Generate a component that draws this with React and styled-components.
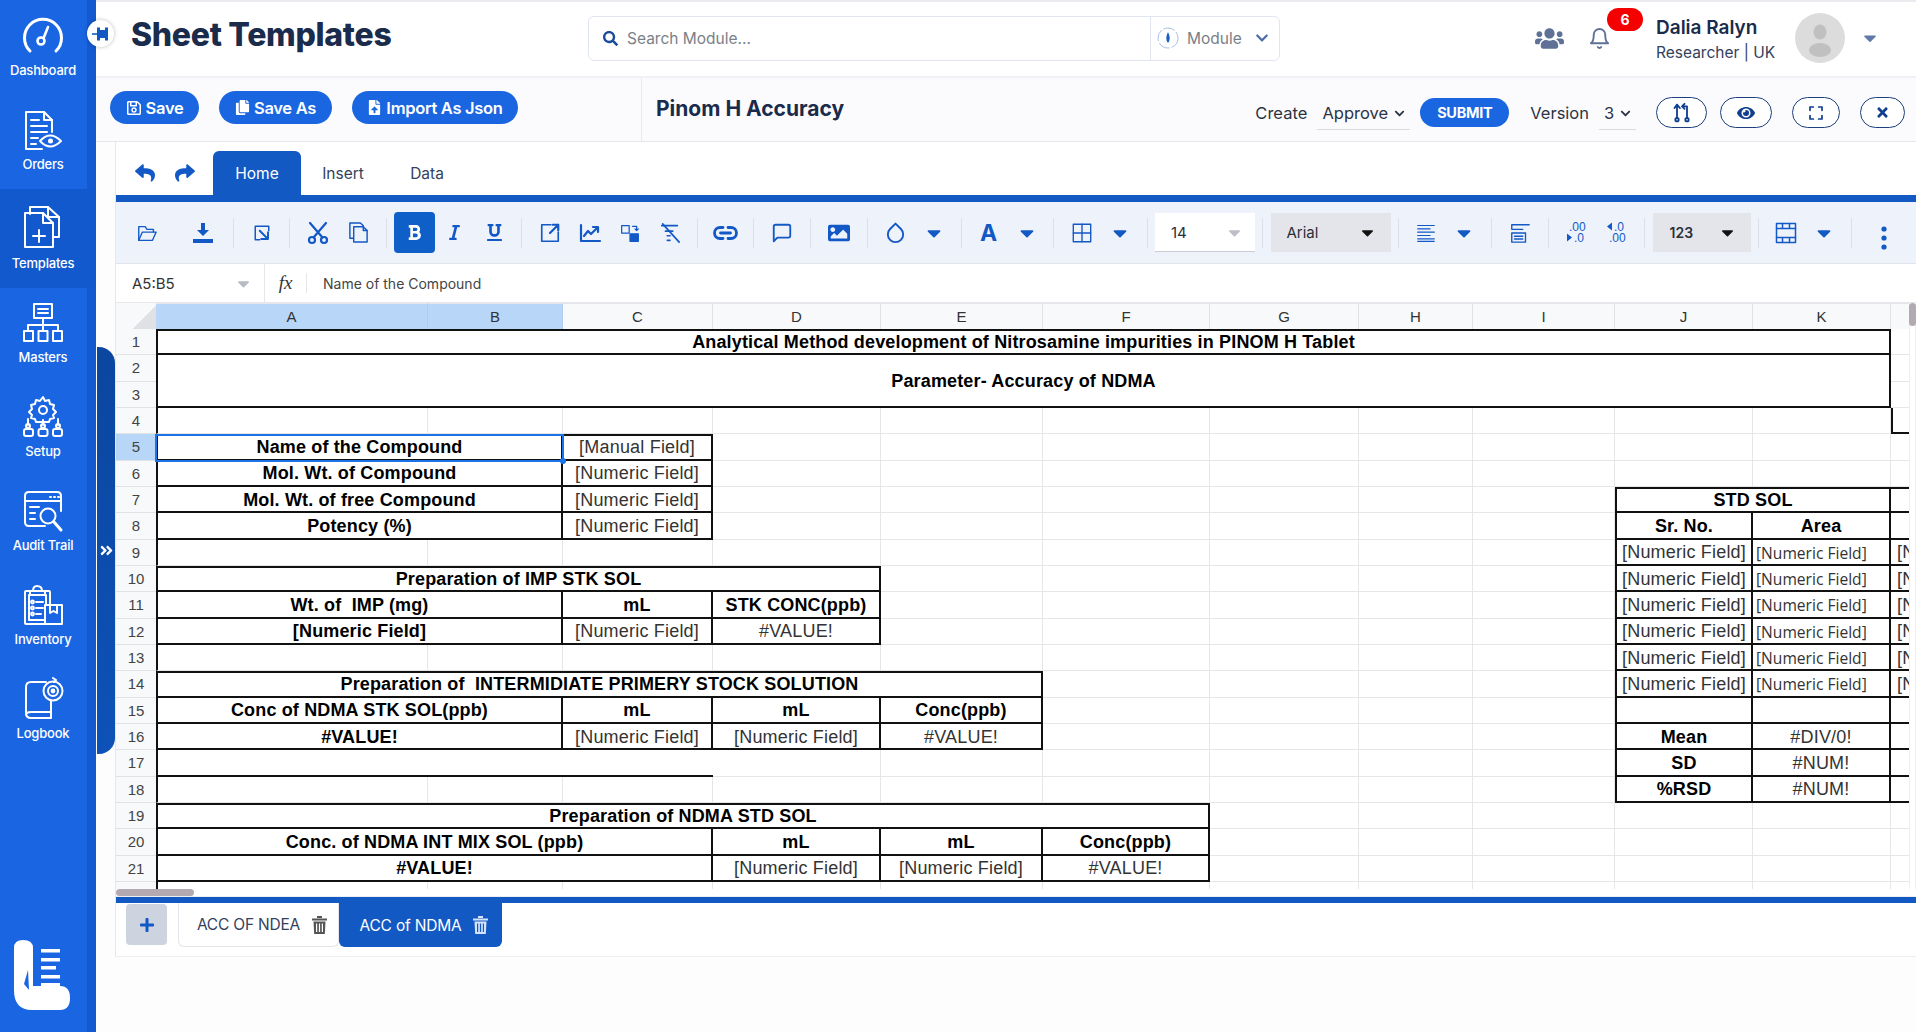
import React from "react";
import styled, { createGlobalStyle } from "styled-components";
import {
  FaReply, FaShare, FaSearch, FaUsers, FaEye, FaTimes, FaChevronDown,
  FaCaretDown, FaFileUpload, FaCopy, FaRegSave, FaAngleDoubleRight, FaPlus, FaImage, FaBold,
  FaItalic, FaUnderline,
} from "react-icons/fa";
import { FiBell, FiDroplet, FiMessageSquare } from "react-icons/fi";

const UI = `Inter, "Noto Sans", sans-serif`;
const SHEET = `"Liberation Sans", Arial, sans-serif`;

const GlobalStyle = createGlobalStyle`
  html, body { margin: 0; padding: 0; background: #fdfdfd; }
  * { box-sizing: border-box; }
  body { font-family: ${UI}; overflow: hidden; }
`;

const Shell = styled.div`
  display: flex;
  position: relative;
  width: 1916px;
  height: 1032px;
  overflow: hidden;
`;

/* ---------- sidebar ---------- */
const Sidebar = styled.nav`
  width: 96px;
  height: 1032px;
  flex-shrink: 0;
  display: flex;
  flex-direction: column;
  padding-top: 1px;
  background: linear-gradient(to right, #1a66e2 87px, #1459cf 87px);
  position: relative;
`;
const NavItem = styled.div`
  height: ${(p) => (p.$active ? "99px" : "94px")};
  padding-top: ${(p) => (p.$active ? "15px" : "13px")};
  padding-right: 10px;
  display: flex;
  flex-direction: column;
  align-items: center;
  background: ${(p) => (p.$active ? "#1259cd" : "transparent")};
  color: #fff;
  font-size: 13px;
  font-weight: 500;
  letter-spacing: -0.2px;
  svg { display: block; height: 44px; width: 44px; margin-bottom: ${(p) => (p.$active ? "7px" : "4px")}; }
`;
const Logo = styled.div`
  margin-top: auto;
  padding: 0 0 22px 14px;
  svg { display: block; }
`;

const Ico = ({ children }) => (
  <svg viewBox="0 0 44 44" fill="none" stroke="#fff" strokeWidth="2" strokeLinecap="round" strokeLinejoin="round">
    {children}
  </svg>
);

const navs = [
  ["Dashboard", <Ico><path strokeWidth="3" d="M9 37 A18.5 18.5 0 1 1 35 37" /><circle cx="20" cy="27" r="3.5" strokeWidth="2.6" /><path strokeWidth="2.6" d="M23 23 L27 13" /></Ico>],
  ["Orders", <Ico><path d="M31 24 V12 L23 4 H5 V41 H21" /><path d="M23 4 V12 H31" /><path d="M10 12 H18 M10 18 H26 M10 24 H26 M10 30 H17 M10 36 H15" /><path d="M19 33 Q29 22 40 33 Q29 44 19 33 Z" /><circle cx="29.5" cy="33" r="1.5" fill="#fff" /></Ico>],
  ["Templates", <Ico><path d="M9 10 V3 H27 L38 13 V33 H32" /><path d="M27 3 V13 H38" /><path d="M4 9 H22 L32 19 V43 H4 Z" /><path d="M22 9 V19 H32" /><path d="M18 26 V38 M12 32 H24" /></Ico>],
  ["Masters", <Ico><rect x="13" y="3" width="18" height="14" /><path d="M17 8 H27 M17 12 H27" /><path d="M22 17 V24 M7 30 V24 H37 V30 M22 24 V30" /><rect x="3" y="30" width="9" height="10" /><rect x="17.5" y="30" width="9" height="10" /><rect x="32" y="30" width="9" height="10" /></Ico>],
  ["Setup", <Ico><path d="M22 2 l2 4 4 -1 1 4 4 1 -1 4 3 3 -3 3 1 3 -4 1 -1 3 H15 l-1 -3 -4 -1 1 -3 -3 -3 3 -3 -1 -4 4 -1 1 -4 4 1 Z" /><circle cx="22" cy="15" r="4" /><path d="M7 24 V30 M22 25 V30 M37 24 V30" /><circle cx="7" cy="31" r="2" /><circle cx="22" cy="31" r="2" /><circle cx="37" cy="31" r="2" /><rect x="3" y="34" width="9" height="7" rx="2" /><rect x="17.5" y="34" width="9" height="7" rx="2" /><rect x="32" y="34" width="9" height="7" rx="2" /></Ico>],
  ["Audit Trail", <Ico><path d="M40 22 V7 Q40 3 36 3 H8 Q4 3 4 7 V33 Q4 37 8 37 H24" /><path d="M4 12 H40" /><path d="M29 8 H30 M33 8 H34 M37 8 H38" /><path d="M9 18 H18 M9 24 H14 M9 30 H14 M9 18 V18" /><circle cx="27" cy="27" r="7.5" /><path strokeWidth="3" d="M33 33 L40 41" /></Ico>],
  ["Inventory", <Ico><rect x="4" y="8" width="25" height="33" rx="1" /><rect x="8" y="12" width="17" height="25" /><path d="M12 8 Q12 3 16 3 Q21 3 21 8 H24 V12 H9 V8 Z" /><circle cx="11.5" cy="19" r="1.4" /><circle cx="11.5" cy="25" r="1.4" /><circle cx="11.5" cy="31" r="1.4" /><path d="M15 19 H22 M15 25 H22 M15 31 H20" /><rect x="24" y="22" width="17" height="19" fill="#1a66e2" /><path d="M29 22 V30 L32.5 28 L36 30 V22" /></Ico>],
  ["Logbook", <Ico><path d="M25 5 H10 Q5 5 5 10 V36 Q5 41 10 41 H30 V35 H10 Q5 35 5 38 M30 35 V24" /><circle cx="32" cy="14" r="9.5" /><circle cx="32" cy="14" r="5" /><circle cx="32" cy="14" r="1.4" fill="#fff" /><path d="M32 1 L35 3 L33 5" /></Ico>],
];

/* ---------- header ---------- */
const Main = styled.div`
  flex: 1;
  min-width: 0;
  display: flex;
  flex-direction: column;
`;
const Header = styled.header`
  height: 76px;
  display: flex;
  align-items: center;
  background: #fff;
  border-top: 2px solid #e9ebef;
  padding-left: 35px;
`;
const Title = styled.h1`
  width: 457px;
  margin: -10px 0 0;
  font-size: 32px;
  font-weight: 800;
  letter-spacing: -0.3px;
  color: #1a2b4b;
`;
const SearchBox = styled.div`
  width: 692px;
  height: 45px;
  margin-top: -2px;
  display: flex;
  align-items: center;
  border: 1px solid #e1e5f0;
  border-radius: 6px;
  background: #fff;
`;
const SearchInput = styled.div`
  flex: 1;
  display: flex;
  align-items: center;
  gap: 9px;
  padding-left: 14px;
  height: 100%;
  color: #7a7f88;
  font-size: 15.5px;
  svg { color: #1a4a9a; font-size: 15px; }
`;
const ModulePick = styled.div`
  width: 129px;
  height: 100%;
  display: flex;
  align-items: center;
  padding-left: 6px;
  gap: 8px;
  border-left: 1px solid #e1e5f0;
  color: #7a7f88;
  font-size: 15.5px;
  > svg:last-child { margin-left: 5px; color: #4d6da8; font-size: 14px; }
`;
const HeadRight = styled.div`
  margin-left: auto;
  margin-top: -2px;
  display: flex;
  align-items: center;
  padding-right: 36px;
`;
const People = styled.div`
  color: #5f7196;
  font-size: 29px;
  line-height: 0;
  margin-right: 24px;
`;
const BellWrap = styled.div`
  position: relative;
  width: 24px;
  margin-right: 44px;
  line-height: 0;
  color: #5f7196;
  font-size: 23px;
`;
const Badge = styled.span`
  position: absolute;
  left: 19px;
  top: -19px;
  width: 36px;
  height: 23px;
  border-radius: 12px;
  background: #f40000;
  color: #fff;
  font-size: 14px;
  line-height: 23px;
  font-weight: 700;
  text-align: center;
`;
const UserInfo = styled.div`
  width: 139px;
  padding-top: 2px;
  display: flex;
  flex-direction: column;
  gap: 4px;
`;
const UserName = styled.div`
  font-size: 19px;
  font-weight: 600;
  color: #1a2b4b;
`;
const UserRole = styled.div`
  font-size: 15.5px;
  color: #33415c;
`;
const Avatar = styled.div`
  line-height: 0;
  margin-right: 15px;
`;

/* ---------- action row ---------- */
const ActionRow = styled.div`
  height: 66px;
  display: flex;
  background: #fbfbfd;
  border-top: 2px solid #f0f1f4;
  border-bottom: 1px solid #e6e7eb;
`;
const ActionLeft = styled.div`
  width: 546px;
  display: flex;
  align-items: center;
  gap: 20px;
  padding: 0 0 4px 14px;
  border-right: 1px solid #e9eaee;
`;
const PillBtn = styled.button`
  width: ${(p) => p.$w}px;
  height: 33px;
  border: 0;
  border-radius: 17px;
  background: #1a66e0;
  color: #fff;
  font-family: ${UI};
  font-size: 16.5px;
  font-weight: 600;
  letter-spacing: -0.3px;
  display: flex;
  align-items: center;
  justify-content: center;
  gap: 4px;
`;
const ActionRight = styled.div`
  flex: 1;
  display: flex;
  align-items: center;
  padding: 0 11px 0 14px;
`;
const DocName = styled.div`
  font-size: 21px;
  font-weight: 700;
  color: #1a2b4b;
  margin-top: -2px;
`;
const Controls = styled.div`
  margin-left: auto;
  display: flex;
  align-items: center;
  font-size: 16.5px;
  color: #2b3344;
  margin-top: 6px;
`;
const Under = styled.div`
  width: ${(p) => p.$w}px;
  height: 34px;
  margin: 0 ${(p) => p.$mr}px 0 ${(p) => p.$ml}px;
  padding-top: 2px;
  display: flex;
  align-items: center;
  justify-content: center;
  gap: 6px;
  border-bottom: 1px solid #d9dbe0;
  svg { font-size: 11px; color: #2b3344; }
`;
const SubmitBtn = styled.button`
  width: 89px;
  height: 29px;
  border: 0;
  border-radius: 15px;
  background: #1a66e0;
  color: #fff;
  font-family: ${UI};
  font-size: 14.5px;
  font-weight: 700;
  letter-spacing: -0.3px;
  margin-right: 21px;
`;
const RoundBtn = styled.button`
  width: ${(p) => p.$w}px;
  height: 31px;
  margin-left: ${(p) => p.$ml}px;
  border: 1.5px solid #1c3f7e;
  border-radius: 16px;
  background: #fff;
  color: #113f8f;
  display: flex;
  align-items: center;
  justify-content: center;
  font-size: 16px;
  padding: 0;
`;

/* ---------- spreadsheet shell ---------- */
const Sheet = styled.section`
  margin-left: 19px;
  height: 815px;
  display: flex;
  flex-direction: column;
  background: #fff;
  border-left: 1px solid #e6e7eb;
  border-bottom: 1px solid #eceef1;
`;
const MenuTabs = styled.div`
  height: 60px;
  flex-shrink: 0;
  display: flex;
  align-items: flex-end;
  border-bottom: 7px solid #1259c3;
  padding-top: 8px;
`;
const History = styled.div`
  width: 97px;
  align-self: center;
  display: flex;
  justify-content: center;
  gap: 20px;
  color: #1359c6;
  font-size: 20px;
  line-height: 0;
`;
const MenuTab = styled.div`
  width: ${(p) => p.$w}px;
  height: 44px;
  display: flex;
  align-items: center;
  justify-content: center;
  border-radius: 6px 6px 0 0;
  background: ${(p) => (p.$on ? "#1259c3" : "transparent")};
  color: ${(p) => (p.$on ? "#fff" : "#33415c")};
  font-size: 15.5px;
`;
const Toolbar = styled.div`
  height: 62px;
  flex-shrink: 0;
  display: flex;
  align-items: center;
  background: #eef2fb;
  border-bottom: 1px solid #e2e4e9;
`;
const Group = styled.div`
  width: ${(p) => p.$w}px;
  height: 100%;
  flex-shrink: 0;
  display: flex;
  align-items: center;
  justify-content: center;
`;
const Sep = styled.i`
  width: 1px;
  height: 30px;
  flex-shrink: 0;
  background: #dcdfe6;
`;
const Tool = styled.div`
  width: ${(p) => p.$w || 40}px;
  height: ${(p) => (p.$on ? "41px" : "auto")};
  display: flex;
  align-items: center;
  justify-content: center;
  border-radius: 4px;
  background: ${(p) => (p.$on ? "#0f5fc9" : "transparent")};
  color: ${(p) => (p.$on ? "#fff" : "#1359c6")};
  font-size: ${(p) => p.$size || 20}px;
  line-height: 0;
`;
const LetterA = styled.span`
  font-family: ${UI};
  font-weight: 700;
  font-size: 23px;
`;
const Kebab = styled.svg`
  margin-top: 10px;
`;
const Select = styled.div`
  width: ${(p) => p.$w}px;
  height: 39px;
  display: flex;
  align-items: center;
  justify-content: space-between;
  padding: 0 ${(p) => p.$pr || 14}px 0 ${(p) => p.$pl || 16}px;
  background: ${(p) => (p.$white ? "#fff" : "#e3e5ea")};
  border-bottom: ${(p) => (p.$white ? "1px solid #c9ccd3" : "0")};
  color: #2b2f38;
  font-size: ${(p) => p.$size || 15}px;
  font-weight: ${(p) => p.$weight || 400};
  svg { font-size: 19px; color: ${(p) => (p.$white ? "#bdbfc6" : "#111")}; }
`;
const FormulaBar = styled.div`
  height: 39px;
  flex-shrink: 0;
  display: flex;
  align-items: center;
  font-family: ${SHEET};
  border-bottom: 1px solid #e6e7eb;
`;
const NameBox = styled.div`
  width: 149px;
  height: 100%;
  display: flex;
  align-items: center;
  justify-content: space-between;
  padding: 0 11px 0 16px;
  font-family: ${UI};
  font-size: 15px;
  color: #333;
  border-right: 1px solid #e6e7eb;
  svg { color: #b7bbc2; font-size: 19px; }
`;
const Fx = styled.div`
  width: 42px;
  height: 20px;
  display: flex;
  align-items: center;
  justify-content: center;
  font: italic 19px "Liberation Serif", serif;
  color: #333;
  border-right: 1px solid #e6e7eb;
`;
const FormulaText = styled.div`
  padding-left: 16px;
  font-family: ${UI};
  font-size: 14px;
  color: #444;
`;

/* ---------- grid ---------- */
const GridArea = styled.div`
  height: 586px;
  flex-shrink: 0;
  display: flex;
`;
const GridClip = styled.div`
  flex: 1;
  min-width: 0;
  overflow: hidden;
`;
const Grid = styled.div`
  display: grid;
  grid-template-columns: 40px 272px 135px 150px 168px 162px 167px 149px 114px 142px 138px 138px 60px;
  grid-template-rows: 26px repeat(22, 26.33px);
  width: max-content;
  font-family: ${SHEET};
`;
const VTrack = styled.div`
  width: 7px;
  flex-shrink: 0;
  border-left: 1px solid #eceef1;
  border-right: 1px solid #eceef1;
  background: #fff;
  &::before {
    content: "";
    display: block;
    height: 23px;
    margin: 0 -1px;
    border-radius: 4px;
    background: #b3aab1;
  }
`;
const Pos = styled.div.attrs((p) => ({
  style: {
    gridRow: `${p.$r + 1} / span ${p.$rs || 1}`,
    gridColumn: `${p.$c + 1} / span ${p.$cs || 1}`,
  },
}))``;
const Corner = styled.div`
  grid-row: 1;
  grid-column: 1;
  background: linear-gradient(135deg, #f7f9fb 65%, #dfe1e4 65%);
`;
const ColHead = styled(Pos)`
  display: flex;
  align-items: center;
  justify-content: center;
  background: ${(p) => (p.$sel ? "#b8d6f7" : "#f7f9fb")};
  border-right: 1px solid ${(p) => (p.$sel ? "#aecdf0" : "#e0e2e6")};
  border-top: 1px solid #e6e7eb;
  font-size: 15px;
  color: #333;
`;
const RowHead = styled(Pos)`
  display: flex;
  align-items: center;
  justify-content: center;
  background: ${(p) => (p.$sel ? "#b8d6f7" : "#f7f9fb")};
  border-bottom: 1px solid #e0e2e6;
  font-size: 15px;
  color: #444;
`;
const Blank = styled(Pos)`
  border-right: 1px solid #e6e6e6;
  border-bottom: 1px solid #e6e6e6;
  border-left: ${(p) => (p.$edge ? "2px solid #111" : "0")};
  background: #fff;
`;
const Cell = styled(Pos)`
  position: relative;
  display: flex;
  align-items: center;
  justify-content: ${(p) => (p.$start ? "flex-start" : "center")};
  padding-left: ${(p) => (p.$start ? (p.$alt ? "3px" : "6px") : "0")};
  padding-top: ${(p) => (p.$top ? "1px" : "2px")};
  white-space: pre;
  background: #fff;
  font-family: ${(p) => (p.$alt ? `"Open Sans", sans-serif` : SHEET)};
  font-size: ${(p) => (p.$alt ? "15.6px" : "18px")};
  font-weight: ${(p) => (p.$b ? 700 : 400)};
  letter-spacing: ${(p) => (p.$alt ? "0" : p.$b ? "0.15px" : "0.2px")};
  color: ${(p) => (p.$b ? "#000" : "#333")};
  border-right: ${(p) => (p.$open ? "0" : "2px solid #111")};
  border-bottom: 2px solid #111;
  border-top: ${(p) => (p.$top ? "2px solid #111" : "0")};
  border-left: ${(p) => (p.$left ? "2px solid #111" : "0")};
`;
const Selected = styled(Pos)`
  position: relative;
  border: 2px solid #1a73e8;
  margin: 0 -1px -1px -1px;
  z-index: 2;
  pointer-events: none;
  &::after {
    content: "";
    position: absolute;
    right: -4px;
    bottom: -4px;
    width: 6px;
    height: 6px;
    border-radius: 50%;
    background: #1a73e8;
  }
`;

const HScroll = styled.div`
  height: 8px;
  flex-shrink: 0;
  background: #fff;
  border-bottom: 1px solid #eceef1;
  &::before {
    content: "";
    display: block;
    width: 78px;
    height: 7px;
    border-radius: 4px;
    background: #b3aab1;
  }
`;
const SheetTabs = styled.div`
  height: 51px;
  display: flex;
  align-items: flex-start;
  border-top: 6px solid #1259c3;
  padding-left: 10px;
`;
const AddSheet = styled.div`
  width: 41px;
  height: 41px;
  margin: 1px 11px 0 0;
  display: flex;
  align-items: center;
  justify-content: center;
  border-radius: 4px;
  background: #ced4df;
  color: #1359c6;
  font-size: 16px;
`;
const SheetTab = styled.div`
  width: ${(p) => p.$w}px;
  height: 44px;
  display: flex;
  align-items: center;
  justify-content: center;
  gap: 12px;
  padding-left: 7px;
  border-radius: 0 0 6px 6px;
  background: ${(p) => (p.$on ? "#1259c3" : "#fff")};
  border: ${(p) => (p.$on ? "0" : "1px solid #e3e5ea")};
  border-top: 0;
  color: ${(p) => (p.$on ? "#fff" : "#33415c")};
  font-size: 15.5px;
  letter-spacing: -0.2px;
  svg { color: ${(p) => (p.$on ? "#d5e4fb" : "#555")}; }
`;

/* ---------- overlays ---------- */
const PinBtn = styled.div`
  position: absolute;
  left: 87px;
  top: 20px;
  width: 27px;
  height: 27px;
  border-radius: 50%;
  background: #fff;
  box-shadow: 0 0 4px rgba(0, 0, 0, 0.25);
  display: flex;
  align-items: center;
  justify-content: center;
`;
const Drawer = styled.div`
  position: absolute;
  left: 97px;
  top: 347px;
  width: 18px;
  height: 407px;
  border-radius: 0 16px 16px 0;
  background: linear-gradient(to bottom, #0b469f, #0d52b8);
  color: #fff;
  display: flex;
  align-items: center;
  justify-content: center;
  font-size: 15px;
`;

const Svg = ({ w = 22, h = 22, vb = "0 0 24 24", children, sw = 1.8, fill = "none" }) => (
  <svg width={w} height={h} viewBox={vb} fill={fill} stroke="currentColor" strokeWidth={sw} strokeLinecap="round" strokeLinejoin="round">
    {children}
  </svg>
);

const Trash = () => (
  <svg width="15" height="18" viewBox="0 0 15 18" fill="currentColor">
    <rect x="0" y="2.5" width="15" height="2" />
    <rect x="5" y="0" width="5" height="2" />
    <path d="M1.5 5.5 H13.5 L12.8 18 H2.2 Z M4 7.5 V16 H5.2 V7.5 Z M6.9 7.5 V16 H8.1 V7.5 Z M9.8 7.5 V16 H11 V7.5 Z" fillRule="evenodd" />
  </svg>
);

const NF = "[Numeric Field]";
// [row, col, rowspan, colspan, text, opts]
const cells = [
  [1, 1, 1, 11, "Analytical Method development of Nitrosamine impurities in PINOM H Tablet", { b: 1, top: 1, left: 1 }],
  [2, 1, 2, 11, "Parameter- Accuracy of NDMA", { b: 1, left: 1 }],
  [5, 1, 1, 2, "Name of the Compound", { b: 1, top: 1, left: 1 }],
  [5, 3, 1, 1, "[Manual Field]", { top: 1 }],
  [6, 1, 1, 2, "Mol. Wt. of Compound", { b: 1, left: 1 }],
  [6, 3, 1, 1, NF],
  [7, 1, 1, 2, "Mol. Wt. of free Compound", { b: 1, left: 1 }],
  [7, 3, 1, 1, NF],
  [8, 1, 1, 2, "Potency (%)", { b: 1, left: 1 }],
  [8, 3, 1, 1, NF],
  [10, 1, 1, 4, "Preparation of IMP STK SOL", { b: 1, top: 1, left: 1 }],
  [11, 1, 1, 2, "Wt. of  IMP (mg)", { b: 1, left: 1 }],
  [11, 3, 1, 1, "mL", { b: 1 }],
  [11, 4, 1, 1, "STK CONC(ppb)", { b: 1 }],
  [12, 1, 1, 2, NF, { b: 1, left: 1 }],
  [12, 3, 1, 1, NF],
  [12, 4, 1, 1, "#VALUE!"],
  [14, 1, 1, 5, "Preparation of  INTERMIDIATE PRIMERY STOCK SOLUTION", { b: 1, top: 1, left: 1 }],
  [15, 1, 1, 2, "Conc of NDMA STK SOL(ppb)", { b: 1, left: 1 }],
  [15, 3, 1, 1, "mL", { b: 1 }],
  [15, 4, 1, 1, "mL", { b: 1 }],
  [15, 5, 1, 1, "Conc(ppb)", { b: 1 }],
  [16, 1, 1, 2, "#VALUE!", { b: 1, left: 1 }],
  [16, 3, 1, 1, NF],
  [16, 4, 1, 1, NF],
  [16, 5, 1, 1, "#VALUE!"],
  [19, 1, 1, 6, "Preparation of NDMA STD SOL", { b: 1, top: 1, left: 1 }],
  [20, 1, 1, 3, "Conc. of NDMA INT MIX SOL (ppb)", { b: 1, left: 1 }],
  [20, 4, 1, 1, "mL", { b: 1 }],
  [20, 5, 1, 1, "mL", { b: 1 }],
  [20, 6, 1, 1, "Conc(ppb)", { b: 1 }],
  [21, 1, 1, 3, "#VALUE!", { b: 1, left: 1 }],
  [21, 4, 1, 1, NF],
  [21, 5, 1, 1, NF],
  [21, 6, 1, 1, "#VALUE!"],
  // STD SOL table
  [7, 10, 1, 2, "STD SOL", { b: 1, top: 1, left: 1 }],
  [7, 12, 1, 1, "", { top: 1, open: 1 }],
  [8, 10, 1, 1, "Sr. No.", { b: 1, left: 1 }],
  [8, 11, 1, 1, "Area", { b: 1 }],
  [8, 12, 1, 1, "", { open: 1 }],
  ...[9, 10, 11, 12, 13, 14].flatMap((r) => [
    [r, 10, 1, 1, NF, { left: 1 }],
    [r, 11, 1, 1, NF, { alt: 1, start: 1 }],
    [r, 12, 1, 1, NF, { start: 1, open: 1 }],
  ]),
  [15, 10, 1, 1, "", { left: 1 }],
  [15, 11, 1, 1, ""],
  [15, 12, 1, 1, "", { open: 1 }],
  [16, 10, 1, 1, "Mean", { b: 1, left: 1 }],
  [16, 11, 1, 1, "#DIV/0!"],
  [16, 12, 1, 1, "", { open: 1 }],
  [17, 10, 1, 1, "SD", { b: 1, left: 1 }],
  [17, 11, 1, 1, "#NUM!"],
  [17, 12, 1, 1, "", { open: 1 }],
  [18, 10, 1, 1, "%RSD", { b: 1, left: 1 }],
  [18, 11, 1, 1, "#NUM!"],
  [18, 12, 1, 1, "", { open: 1 }],
  // stray lines
  [17, 1, 1, 3, "", { left: 1, open: 1 }],
  [4, 12, 1, 1, "", { left: 1, open: 1 }],
];

const columns = "ABCDEFGHIJKL".split("");
const rows = Array.from({ length: 22 }, (_, i) => i + 1);

const Caret = () => <Tool $w={38} $size={22}><FaCaretDown /></Tool>;

const DecTxt = styled.text`
  font-family: ${SHEET};
  font-size: 12px;
  fill: currentColor;
`;

function DecimalIcon({ flip }) {
  return (
    <svg width="26" height="23" viewBox="0 0 26 23">
      <DecTxt x={flip ? 10 : 5} y="10">{flip ? ".0" : ".00"}</DecTxt>
      <DecTxt x={flip ? 5 : 10} y="21">{flip ? ".00" : ".0"}</DecTxt>
      <path d={flip ? "M8 1.5 L3 5.5 L8 9.5 Z" : "M3 12.5 L8 16.5 L3 20.5 Z"} fill="currentColor" />
    </svg>
  );
}

const App = () => {
  return (
    <Shell>
      <GlobalStyle />
      <Sidebar>
        {navs.map(([label, icon]) => (
          <NavItem key={label} $active={label === "Templates"}>
            {icon}
            {label}
          </NavItem>
        ))}
        <Logo>
          <svg width="56" height="70" viewBox="0 0 56 70" fill="#fff">
            <path d="M0 8 Q0 0 9 0 Q19 0 19 8 V46 H46 Q56 46 56 58 Q56 70 46 70 H18 Q0 70 0 50 Z" />
            <path d="M14 30 L10 44 L15 50 Z" fill="#1a66e2" />
            <rect x="27" y="9" width="19" height="3.5" />
            <rect x="27" y="18" width="19" height="3.5" />
            <rect x="27" y="26" width="15" height="3.5" />
            <rect x="27" y="35" width="19" height="3.5" />
            <rect x="27" y="43" width="19" height="3.5" />
          </svg>
        </Logo>
      </Sidebar>

      <Main>
        <Header>
          <Title>Sheet Templates</Title>
          <SearchBox>
            <SearchInput>
              <FaSearch />
              Search Module...
            </SearchInput>
            <ModulePick>
              <svg width="22" height="22" viewBox="0 0 22 22" fill="none">
                <circle cx="11" cy="11" r="10" stroke="#a9c0e4" strokeDasharray="12 2" />
                <path d="M11 5 Q14.5 12 11 16 Q7.5 12 11 5 Z" fill="#1a5cc0" />
              </svg>
              Module
              <FaChevronDown />
            </ModulePick>
          </SearchBox>
          <HeadRight>
            <People><FaUsers /></People>
            <BellWrap>
              <FiBell />
              <Badge>6</Badge>
            </BellWrap>
            <UserInfo>
              <UserName>Dalia Ralyn</UserName>
              <UserRole>Researcher | UK</UserRole>
            </UserInfo>
            <Avatar>
              <svg width="50" height="50" viewBox="0 0 50 50">
                <circle cx="25" cy="25" r="25" fill="#dcdcdc" />
                <ellipse cx="25" cy="19" rx="6.5" ry="7.5" fill="#c0c0c0" />
                <ellipse cx="25" cy="37" rx="11" ry="7" fill="#c0c0c0" />
              </svg>
            </Avatar>
            <FaCaretDown color="#5f7aa8" size={20} />
          </HeadRight>
        </Header>

        <ActionRow>
          <ActionLeft>
            <PillBtn $w={89}><FaRegSave size={16} />Save</PillBtn>
            <PillBtn $w={113}><FaCopy size={15} />Save As</PillBtn>
            <PillBtn $w={166}><FaFileUpload size={15} />Import As Json</PillBtn>
          </ActionLeft>
          <ActionRight>
            <DocName>Pinom H Accuracy</DocName>
            <Controls>
              Create
              <Under $w={93} $ml={10} $mr={10}>Approve <FaChevronDown /></Under>
              <SubmitBtn>SUBMIT</SubmitBtn>
              Version
              <Under $w={37} $ml={10} $mr={0}>3 <FaChevronDown /></Under>
              <RoundBtn $w={51} $ml={20}>
                <Svg w={20} h={20} sw={2.2}>
                  <circle cx="6" cy="20" r="2" /><circle cx="18" cy="20" r="2" />
                  <path d="M6 18 V4 M6 2 L9.5 6 M6 2 L3 6" /><path d="M18 18 V4 M18 4 H12 M12 4 L15 1 M12 4 L15 7" />
                </Svg>
              </RoundBtn>
              <RoundBtn $w={52} $ml={13}><FaEye size={18} /></RoundBtn>
              <RoundBtn $w={48} $ml={20}>
                <Svg w={16} h={16} sw={2.6}><path d="M8 3 H3 V8 M16 3 H21 V8 M3 16 V21 H8 M21 16 V21 H16" /></Svg>
              </RoundBtn>
              <RoundBtn $w={45} $ml={20}><FaTimes size={15} /></RoundBtn>
            </Controls>
          </ActionRight>
        </ActionRow>

        <Sheet>
          <MenuTabs>
            <History><FaReply /><FaShare /></History>
            <MenuTab $w={88} $on>Home</MenuTab>
            <MenuTab $w={84}>Insert</MenuTab>
            <MenuTab $w={84}>Data</MenuTab>
          </MenuTabs>

          <Toolbar>
            <Group $w={117}>
              <Tool $w={56}>
                <Svg w={22} h={22} sw={1.5}><path d="M3 20 V5 H10 L12 8 H19 V11" /><path d="M3 20 L7 11 H22 L18 20 Z" /></Svg>
              </Tool>
              <Tool $w={56}>
                <Svg w={24} h={24} fill="currentColor" sw={0}><path d="M10 2 H14 V9 H18 L12 15 L6 9 H10 Z" /><rect x="2" y="18" width="20" height="4" /></Svg>
              </Tool>
            </Group>
            <Sep />
            <Group $w={55}>
              <Tool>
                <Svg w={18} h={18} sw={2}><path d="M21 9 V3 H3 V21 H9" /><path d="M9 9 L20 20 M20 11 V20 H11" strokeWidth="2.6" /></Svg>
              </Tool>
            </Group>
            <Sep />
            <Group $w={96}>
              <Tool>
                <Svg w={24} h={24} sw={2.2}>
                  <circle cx="6" cy="19" r="3" /><circle cx="18" cy="19" r="3" />
                  <path d="M7.5 16.5 L20 2 M16.5 16.5 L4 2" />
                </Svg>
              </Tool>
              <Tool>
                <Svg w={23} h={23} sw={1.5}>
                  <path d="M6 18 H3 V2 H14 L17 5" /><path d="M7 6 H17 L21 10 V22 H7 Z" /><path d="M17 6 V10 H21" />
                </Svg>
              </Tool>
            </Group>
            <Sep />
            <Group $w={134}>
              <Tool $on $w={41} $size={17}><FaBold /></Tool>
              <Tool $size={17}><FaItalic /></Tool>
              <Tool $size={17}><FaUnderline /></Tool>
            </Group>
            <Sep />
            <Group $w={175}>
              <Tool>
                <Svg w={22} h={22} sw={1.8}><path d="M13 3 H3 V21 H21 V11" /><path d="M12 12 L21 3 M15 3 H21 V9" strokeWidth="2.4" /></Svg>
              </Tool>
              <Tool>
                <Svg w={24} h={24} sw={2.2}><path d="M3 4 V20 H22" /><path d="M6 15 L10 10 L13 13 L19 7 M15 6 H20 V11" /></Svg>
              </Tool>
              <Tool>
                <Svg w={20} h={20} sw={1.5}><rect x="2" y="3" width="9" height="9" /><rect x="12" y="13" width="10" height="9" fill="currentColor" /><path d="M15 4 H20 V9 M18 7 L20 9 L22 7" /></Svg>
              </Tool>
              <Tool>
                <Svg w={22} h={22} sw={1.8}><path d="M3 4 H20 M7 10 H15 M9 15 H12 M9 20 H12" /><path d="M4 2 L22 22" /></Svg>
              </Tool>
            </Group>
            <Sep />
            <Group $w={55}>
              <Tool>
                <Svg w={25} h={16} vb="0 0 25 16" sw={2.8}>
                  <path d="M10 2.5 H7 A5.5 5.5 0 0 0 7 13.5 H10 M15 2.5 H18 A5.5 5.5 0 0 1 18 13.5 H15 M7.5 8 H17.5" />
                </Svg>
              </Tool>
            </Group>
            <Sep />
            <Group $w={56}><Tool $size={22}><FiMessageSquare /></Tool></Group>
            <Sep />
            <Group $w={56}><Tool $size={22}><FaImage /></Tool></Group>
            <Sep />
            <Group $w={93}>
              <Tool $w={38} $size={23}><FiDroplet /></Tool>
              <Caret />
            </Group>
            <Sep />
            <Group $w={91}>
              <Tool $w={38}><LetterA>A</LetterA></Tool>
              <Caret />
            </Group>
            <Sep />
            <Group $w={93}>
              <Tool $w={38}>
                <Svg w={22} h={22} sw={1.5}><rect x="2.5" y="2.5" width="19" height="19" /><path d="M12 2.5 V21.5 M2.5 12 H21.5" /></Svg>
              </Tool>
              <Caret />
            </Group>
            <Sep />
            <Group $w={114}>
              <Select $w={100} $white $pl={16} $pr={11}>14<FaCaretDown /></Select>
            </Group>
            <Sep />
            <Group $w={135}>
              <Select $w={120}>Arial<FaCaretDown /></Select>
            </Group>
            <Sep />
            <Group $w={92}>
              <Tool $w={38}>
                <Svg w={20} h={20} sw={1.4}><path d="M2 3 H22 M2 7 H17 M2 11 H22 M2 15 H17 M2 19 H22 M2 22 H22" /></Svg>
              </Tool>
              <Caret />
            </Group>
            <Sep />
            <Group $w={56}>
              <Tool>
                <Svg w={22} h={22} sw={1.5}><path d="M3 3 H22 M3 3 V8 H15" /><rect x="3" y="12" width="15" height="10" /><path d="M6 15.5 H15 M6 18.5 H15" /></Svg>
              </Tool>
            </Group>
            <Sep />
            <Group $w={95}>
              <Tool $w={40}><DecimalIcon flip={false} /></Tool>
              <Tool $w={40}><DecimalIcon flip /></Tool>
            </Group>
            <Sep />
            <Group $w={113}>
              <Select $w={98} $size={14} $weight={600} $pl={17}>123<FaCaretDown /></Select>
            </Group>
            <Sep />
            <Group $w={92}>
              <Tool $w={38}>
                <Svg w={24} h={24} sw={1.5}><rect x="2.5" y="2.5" width="19" height="19" /><path d="M2.5 7.5 H21.5 M2.5 16.5 H21.5 M8.5 2.5 V7.5 M15.5 2.5 V7.5 M8.5 16.5 V21.5 M15.5 16.5 V21.5" /></Svg>
              </Tool>
              <Caret />
            </Group>
            <Sep />
            <Group $w={63}>
              <Tool>
                <Kebab width="6" height="24" viewBox="0 0 6 24" fill="currentColor">
                  <circle cx="3" cy="3" r="2.6" /><circle cx="3" cy="12" r="2.6" /><circle cx="3" cy="21" r="2.6" />
                </Kebab>
              </Tool>
            </Group>
          </Toolbar>

          <FormulaBar>
            <NameBox>A5:B5<FaCaretDown /></NameBox>
            <Fx>fx</Fx>
            <FormulaText>Name of the Compound</FormulaText>
          </FormulaBar>

          <GridArea>
            <GridClip>
              <Grid>
                <Corner />
                {columns.map((l, i) => (
                  <ColHead key={l} $r={0} $c={i + 1} $sel={i < 2}>{l === "L" ? "" : l}</ColHead>
                ))}
                {rows.map((r) => (
                  <RowHead key={r} $r={r} $c={0} $sel={r === 5}>{r}</RowHead>
                ))}
                {rows.flatMap((r) =>
                  columns.map((l, i) => <Blank key={r + l} $r={r} $c={i + 1} $edge={i === 0} />)
                )}
                {cells.map(([r, c, rs, cs, text, o = {}]) => (
                  <Cell
                    key={`${r}-${c}`}
                    $r={r}
                    $c={c}
                    $rs={rs}
                    $cs={cs}
                    $b={o.b}
                    $top={o.top}
                    $left={o.left}
                    $alt={o.alt}
                    $start={o.start}
                    $open={o.open}
                  >
                    {text}
                  </Cell>
                ))}
                <Selected $r={5} $c={1} $cs={2} />
              </Grid>
            </GridClip>
            <VTrack />
          </GridArea>

          <HScroll />
          <SheetTabs>
            <AddSheet><FaPlus /></AddSheet>
            <SheetTab $w={161}>ACC OF NDEA <Trash /></SheetTab>
            <SheetTab $w={163} $on>ACC of NDMA <Trash /></SheetTab>
          </SheetTabs>
        </Sheet>
      </Main>

      <PinBtn>
        <svg width="18" height="16" viewBox="0 0 18 16" fill="#1259c3">
          <rect x="0" y="7.2" width="6" height="1.6" />
          <rect x="5" y="1.5" width="3" height="13" />
          <rect x="7" y="4" width="7" height="8" />
          <rect x="13" y="1.5" width="3" height="13" />
        </svg>
      </PinBtn>
      <Drawer><FaAngleDoubleRight /></Drawer>
    </Shell>
  );
};

export default App;
